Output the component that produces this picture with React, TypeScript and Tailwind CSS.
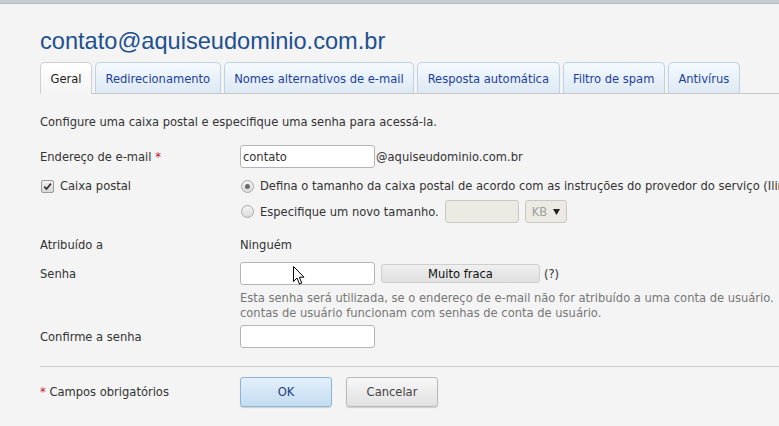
import React from 'react';

// Mailbox settings form (Geral tab)

const tabs = [
  'Geral',
  'Redirecionamento',
  'Nomes alternativos de e-mail',
  'Resposta automática',
  'Filtro de spam',
  'Antivírus',
];

const Radio: React.FC<{ checked?: boolean }> = ({ checked }) => (
  <span className="w-[13px] h-[13px] rounded-full border border-[#a9a9a9] bg-gradient-to-b from-[#f4f4f4] to-[#dcdcdc] flex items-center justify-center shrink-0">
    {checked && <span className="w-[5px] h-[5px] rounded-full bg-[#6b6b6b]" />}
  </span>
);

const Checkbox: React.FC = () => (
  <span className="w-[13px] h-[13px] rounded-[2px] border border-[#9c9c9c] bg-gradient-to-b from-[#f2f2f2] to-[#d8d8d8] flex items-center justify-center shrink-0">
    <svg width="9" height="9" viewBox="0 0 9 9">
      <path d="M1.2 4.6 L3.5 7 L7.9 1.6" fill="none" stroke="#333" strokeWidth="1.7" />
    </svg>
  </span>
);

const TextInput: React.FC<{ value?: string; disabled?: boolean }> = ({ value, disabled }) => (
  <div
    className={
      'h-[23px] rounded-[3px] border flex items-center px-[2px] ' +
      (disabled ? 'w-[74px] border-[#c9c9c1] bg-[#ebebe4]' : 'w-[135px] border-[#b5b5b5] bg-white')
    }
  >
    {value}
  </div>
);

const Row: React.FC<{ label?: React.ReactNode; className?: string; children?: React.ReactNode }> = ({
  label,
  className,
  children,
}) => (
  <div className={'flex items-center ' + (className || '')}>
    <div className="w-[200px] shrink-0 flex items-center">{label}</div>
    <div className="flex items-center whitespace-nowrap">{children}</div>
  </div>
);

export default function App() {
  return (
    <div className="w-[779px] h-[426px] bg-[#f4f4f4] overflow-hidden relative font-['DejaVu_Sans_Condensed','DejaVu_Sans',sans-serif] text-[12.8px] text-[#333]">
      <div className="h-[4px] bg-[#c5cdd3] border-b border-[#b3bbc1]" />

      <div className="pl-[40px]">
        <h1 className="mt-[23px] h-[28px] leading-[28px] font-['Liberation_Sans',Arial,sans-serif] text-[23.6px] text-[#21508f] whitespace-nowrap">
          contato@aquiseudominio.com.br
        </h1>

        {/* tabs */}
        <div className="mt-[7px] flex items-end gap-[3px] border-b border-[#c8c8c8] h-[32px] whitespace-nowrap">
          {tabs.map((t, i) =>
            i === 0 ? (
              <div
                key={t}
                className="h-[32px] -mb-px px-[9.5px] pt-[1px] flex items-center rounded-t-[5px] border border-b-0 border-[#cfcfcf] bg-gradient-to-b from-white to-[#f4f4f4] text-[#222]"
              >
                {t}
              </div>
            ) : (
              <div
                key={t}
                className="h-[31px] px-[9.5px] pt-[1px] flex items-center rounded-t-[5px] border border-b-0 border-[#bfd2e2] bg-gradient-to-b from-[#f5faff] to-[#dde9f4] text-[#1d3fa0]"
              >
                {t}
              </div>
            )
          )}
        </div>

        <p className="mt-[20px] leading-[16px] whitespace-nowrap">
          Configure uma caixa postal e especifique uma senha para acessá-la.
        </p>

        <Row
          className="mt-[15px] h-[23px]"
          label={
            <span>
              Endereço de e-mail <span className="text-[#c8102e]">*</span>
            </span>
          }
        >
          <TextInput value="contato" />
          <span className="ml-px">@aquiseudominio.com.br</span>
        </Row>

        <Row
          className="mt-[6px] h-[24px]"
          label={
            <span className="flex items-center gap-[6px] pl-px">
              <Checkbox />
              Caixa postal
            </span>
          }
        >
          <span className="pl-px flex items-center gap-[6px]">
            <Radio checked />
            Defina o tamanho da caixa postal de acordo com as instruções do provedor do serviço (Ilimitado)
          </span>
        </Row>

        <Row className="mt-[2px] h-[23px]">
          <span className="pl-px flex items-center gap-[6px]">
            <Radio />
            Especifique um novo tamanho.
          </span>
          <span className="ml-[6px]">
            <TextInput disabled />
          </span>
          <span className="ml-[6px] h-[23px] w-[42px] rounded-[3px] border border-[#c9c9c1] bg-[#ebebe4] flex items-center justify-between pl-[6px] pr-[6px] text-[#a0a0a0]">
            KB
            <svg width="7" height="6" viewBox="0 0 7 6">
              <path d="M0 0 H7 L3.5 6 Z" fill="#222" />
            </svg>
          </span>
        </Row>

        <Row className="mt-[12px] h-[20px]" label="Atribuído a">
          Ninguém
        </Row>

        <Row className="mt-[7px] h-[23px]" label="Senha">
          <TextInput />
          <span className="ml-[6px] w-[159px] h-[19px] rounded-[3px] border border-[#cfcfcf] bg-gradient-to-b from-[#efefef] to-[#e0e0e0] flex items-center justify-center text-[#111]">
            Muito fraca
          </span>
          <span className="ml-[4px]">(?)</span>
        </Row>

        <div className="pl-[200px] mt-[5px] leading-[15px] text-[#777] whitespace-nowrap">
          <div>Esta senha será utilizada, se o endereço de e-mail não for atribuído a uma conta de usuário.</div>
          <div>contas de usuário funcionam com senhas de conta de usuário.</div>
        </div>

        <Row className="mt-[5px] h-[23px]" label="Confirme a senha">
          <TextInput />
        </Row>

        <div className="mt-[18px] border-t border-[#cccccc]" />

        <Row
          className="mt-[10px] h-[29px]"
          label={
            <span>
              <span className="text-[#c8102e]">*</span> Campos obrigatórios
            </span>
          }
        >
          <button className="w-[92px] h-[30px] rounded-[3px] border border-[#8fb3d3] bg-gradient-to-b from-[#e3f0fb] to-[#c4dcf1] text-[#1d3f7a] shadow-[0_1px_1px_rgba(0,0,0,0.15)]">
            OK
          </button>
          <button className="ml-[14px] w-[92px] h-[30px] rounded-[3px] border border-[#b9b9b9] bg-gradient-to-b from-[#f7f7f7] to-[#e1e1e1] text-[#444] shadow-[0_1px_1px_rgba(0,0,0,0.15)]">
            Cancelar
          </button>
        </Row>
      </div>

      {/* mouse pointer over the password field */}
      <svg className="absolute left-[293px] top-[266px]" width="12" height="19" viewBox="0 0 12 19">
        <path d="M0.5 0.5 V15.5 L4 12 L6.5 18 L8.8 17 L6.3 11.2 H11 Z" fill="#fff" stroke="#000" strokeWidth="1" />
      </svg>
    </div>
  );
}
